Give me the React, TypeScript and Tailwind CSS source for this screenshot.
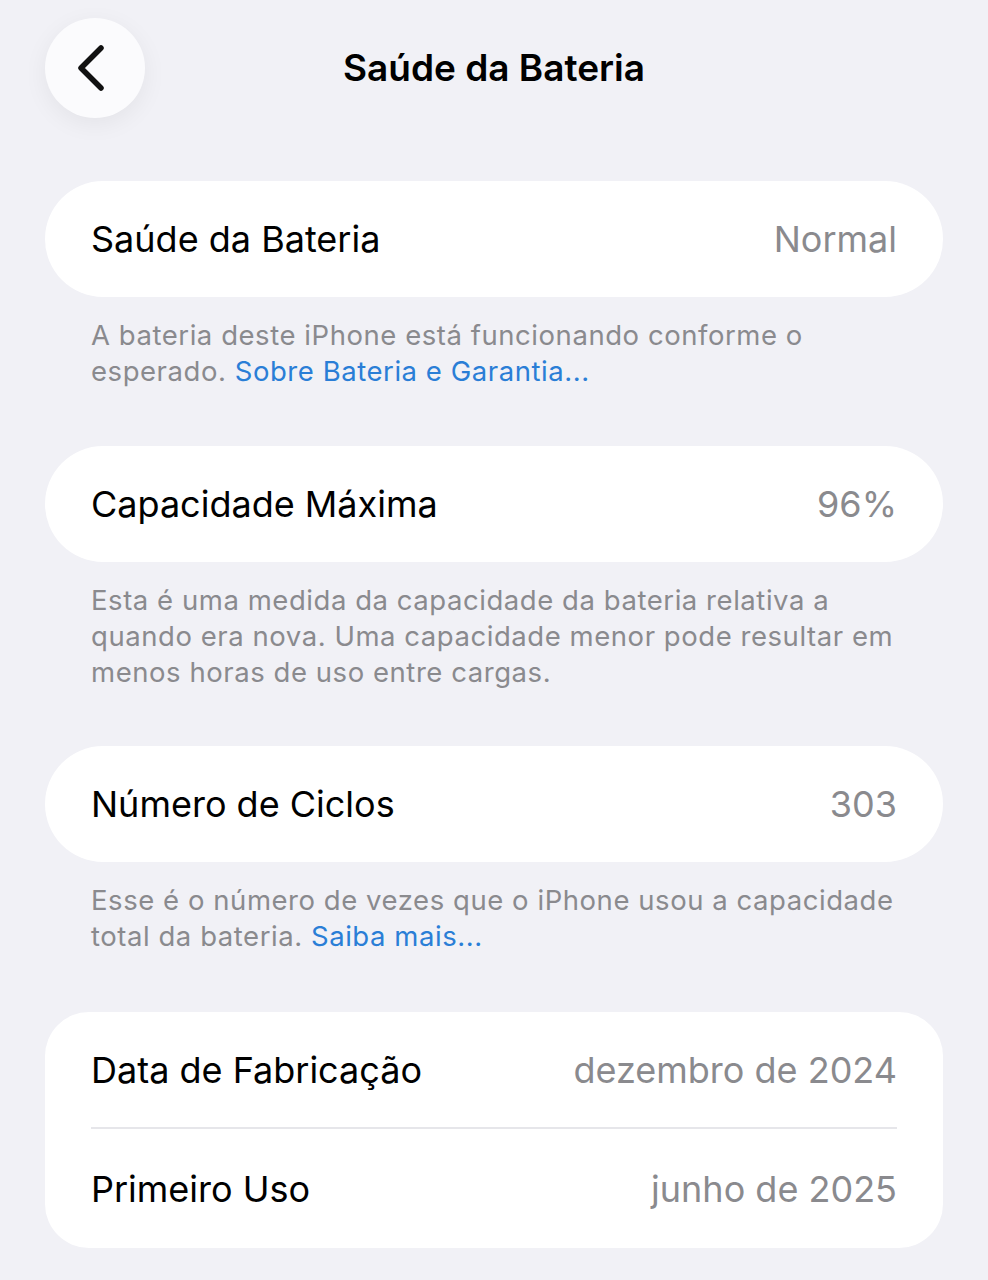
type Row = { label: string; value: string };

function Pill({ label, value }: Row) {
  return (
    <div className="flex h-[116px] items-center justify-between rounded-[58px] bg-white px-[46px]">
      <span className="text-[36px] text-black">{label}</span>
      <span className="text-[36px] text-[#8a8a8e]">{value}</span>
    </div>
  );
}

function Note({ children }: { children: React.ReactNode }) {
  return (
    <p className="mt-[20px] px-[46px] text-[27.5px] leading-[36px] tracking-[0.55px] text-[#8a8a8e]">
      {children}
    </p>
  );
}

export default function App() {
  return (
    <div
      className="min-h-[1280px] bg-[#f1f1f6] px-[45px] pt-[18px] pb-[32px]"
      style={{ fontFamily: "Inter, 'Noto Sans', sans-serif" }}
    >
      <div className="grid grid-cols-[100px_1fr_100px] items-center">
        <button className="flex h-[100px] w-[100px] items-center justify-center rounded-full bg-[#fbfbfd] shadow-[0_6px_24px_rgba(0,0,0,0.06)]">
          <svg width="100" height="100" viewBox="0 0 100 100" fill="none">
            <path d="M56 30 L36 50 L56 70" stroke="#111" strokeWidth="5.5" strokeLinecap="round" strokeLinejoin="round" />
          </svg>
        </button>
        <h1 className="text-center text-[37px] font-semibold text-black">Saúde da Bateria</h1>
        <div />
      </div>

      <div className="mt-[63px]">
        <Pill label="Saúde da Bateria" value="Normal" />
        <Note>
          A bateria deste iPhone está funcionando conforme o esperado.{" "}
          <span className="text-[#2a7ed6]">Sobre Bateria e Garantia...</span>
        </Note>
      </div>

      <div className="mt-[57px]">
        <Pill label="Capacidade Máxima" value="96%" />
        <Note>
          Esta é uma medida da capacidade da bateria relativa a quando era nova. Uma capacidade menor pode resultar em
          menos horas de uso entre cargas.
        </Note>
      </div>

      <div className="mt-[56px]">
        <Pill label="Número de Ciclos" value="303" />
        <Note>
          Esse é o número de vezes que o iPhone usou a capacidade total da bateria.{" "}
          <span className="text-[#2a7ed6]">Saiba mais...</span>
        </Note>
      </div>

      <div className="mt-[58px] rounded-[44px] bg-white px-[46px]">
        <div className="flex h-[117px] items-center justify-between border-b-2 border-[#e6e6ea]">
          <span className="text-[36px] text-black">Data de Fabricação</span>
          <span className="text-[36px] text-[#8a8a8e]">dezembro de 2024</span>
        </div>
        <div className="flex h-[119px] items-center justify-between">
          <span className="text-[36px] text-black">Primeiro Uso</span>
          <span className="text-[36px] text-[#8a8a8e]">junho de 2025</span>
        </div>
      </div>
    </div>
  );
}
